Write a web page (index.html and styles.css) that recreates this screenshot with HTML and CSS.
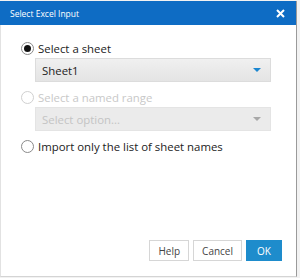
FILE: index.html
```html
<!DOCTYPE html>
<html lang="en">
<head>
    <meta charset="UTF-8">
    <title>Select Excel Input</title>
    <link rel="stylesheet" href="styles.css">
</head>
<body>
    <div class="dialog">
        <div class="titlebar">
            <span class="title">Select Excel Input</span>
            <svg class="close" width="9" height="9" viewBox="0 0 9 9">
                <path d="M1 1 L8 8 M8 1 L1 8" stroke="#fff" stroke-width="2"/>
            </svg>
        </div>
        <div class="content">
            <label class="option">
                <span class="radio checked"></span>
                <span>Select a sheet</span>
            </label>
            <div class="select">
                <span>Sheet1</span>
                <span class="arrow"></span>
            </div>
            <label class="option disabled">
                <span class="radio"></span>
                <span>Select a named range</span>
            </label>
            <div class="select disabled">
                <span>Select option...</span>
                <span class="arrow"></span>
            </div>
            <label class="option">
                <span class="radio"></span>
                <span>Import only the list of sheet names</span>
            </label>
        </div>
        <div class="footer">
            <button class="btn">Help</button>
            <button class="btn">Cancel</button>
            <button class="btn primary">OK</button>
        </div>
    </div>
</body>
</html>
```

FILE: styles.css
```css
*{
    box-sizing: border-box;
}
body{
    margin: 0;
    background-color: #f2f2f2;
    font-family: 'Open Sans', 'Noto Sans', sans-serif;
}
.dialog{
    width: 297px;
    height: 276px;
    margin-top: 1px;
    background-color: #fff;
    border-left: 1px solid #e2e2e2;
    border-right: 1px solid #9a9a9a;
    border-bottom: 1px solid #d4d4d4;
    display: flex;
    flex-direction: column;
}
.titlebar{
    height: 24px;
    margin-left: -1px;
    background-color: #0e6cc4;
    color: #fff;
    display: flex;
    align-items: center;
    justify-content: space-between;
    padding: 0 10px 0 10px;
}
.title{
    font-size: 8.5px;
}
.close{
    margin-right: 1px;
}
.content{
    flex: 1;
    padding: 15px 0 0 20px;
}
.option{
    display: flex;
    align-items: center;
    gap: 4px;
    font-size: 11.4px;
    color: #222;
    height: 16px;
}
.option.disabled{
    color: #c8c8c8;
}
.radio{
    width: 13px;
    height: 13px;
    border: 1px solid #8a8a8a;
    border-radius: 50%;
    background-color: #fff;
    display: flex;
    align-items: center;
    justify-content: center;
}
.option.disabled .radio{
    border-color: #d0d0d0;
}
.radio.checked::after{
    content: "";
    width: 7px;
    height: 7px;
    border-radius: 50%;
    background-color: #111;
}
.select{
    width: 236px;
    height: 24px;
    margin: 2px 0 7px 14px;
    border: 1px solid #dcdcdc;
    background: linear-gradient(#f0f0f0, #e4e4e4);
    display: flex;
    align-items: center;
    justify-content: space-between;
    padding: 0 9px 0 6px;
    font-size: 11.4px;
    color: #222;
}
.arrow{
    width: 0;
    height: 0;
    border-left: 4px solid transparent;
    border-right: 4px solid transparent;
    border-top: 4px solid #1a86d0;
}
.select.disabled{
    color: #c4c4c4;
    background: #ebebeb;
    border-color: #e4e4e4;
}
.select.disabled .arrow{
    border-top-color: #a8a8a8;
}
.footer{
    display: flex;
    justify-content: flex-end;
    gap: 4px;
    padding: 0 14px 15px 0;
}
.btn{
    height: 21px;
    padding: 0 8px;
    font-family: 'Open Sans', 'Noto Sans', sans-serif;
    font-size: 10px;
    color: #444;
    background-color: #fff;
    border: 1px solid #d6d6d6;
}
.btn.primary{
    width: 36px;
    background-color: #1e8ccc;
    border-color: #1e8ccc;
    color: #fff;
}
```
